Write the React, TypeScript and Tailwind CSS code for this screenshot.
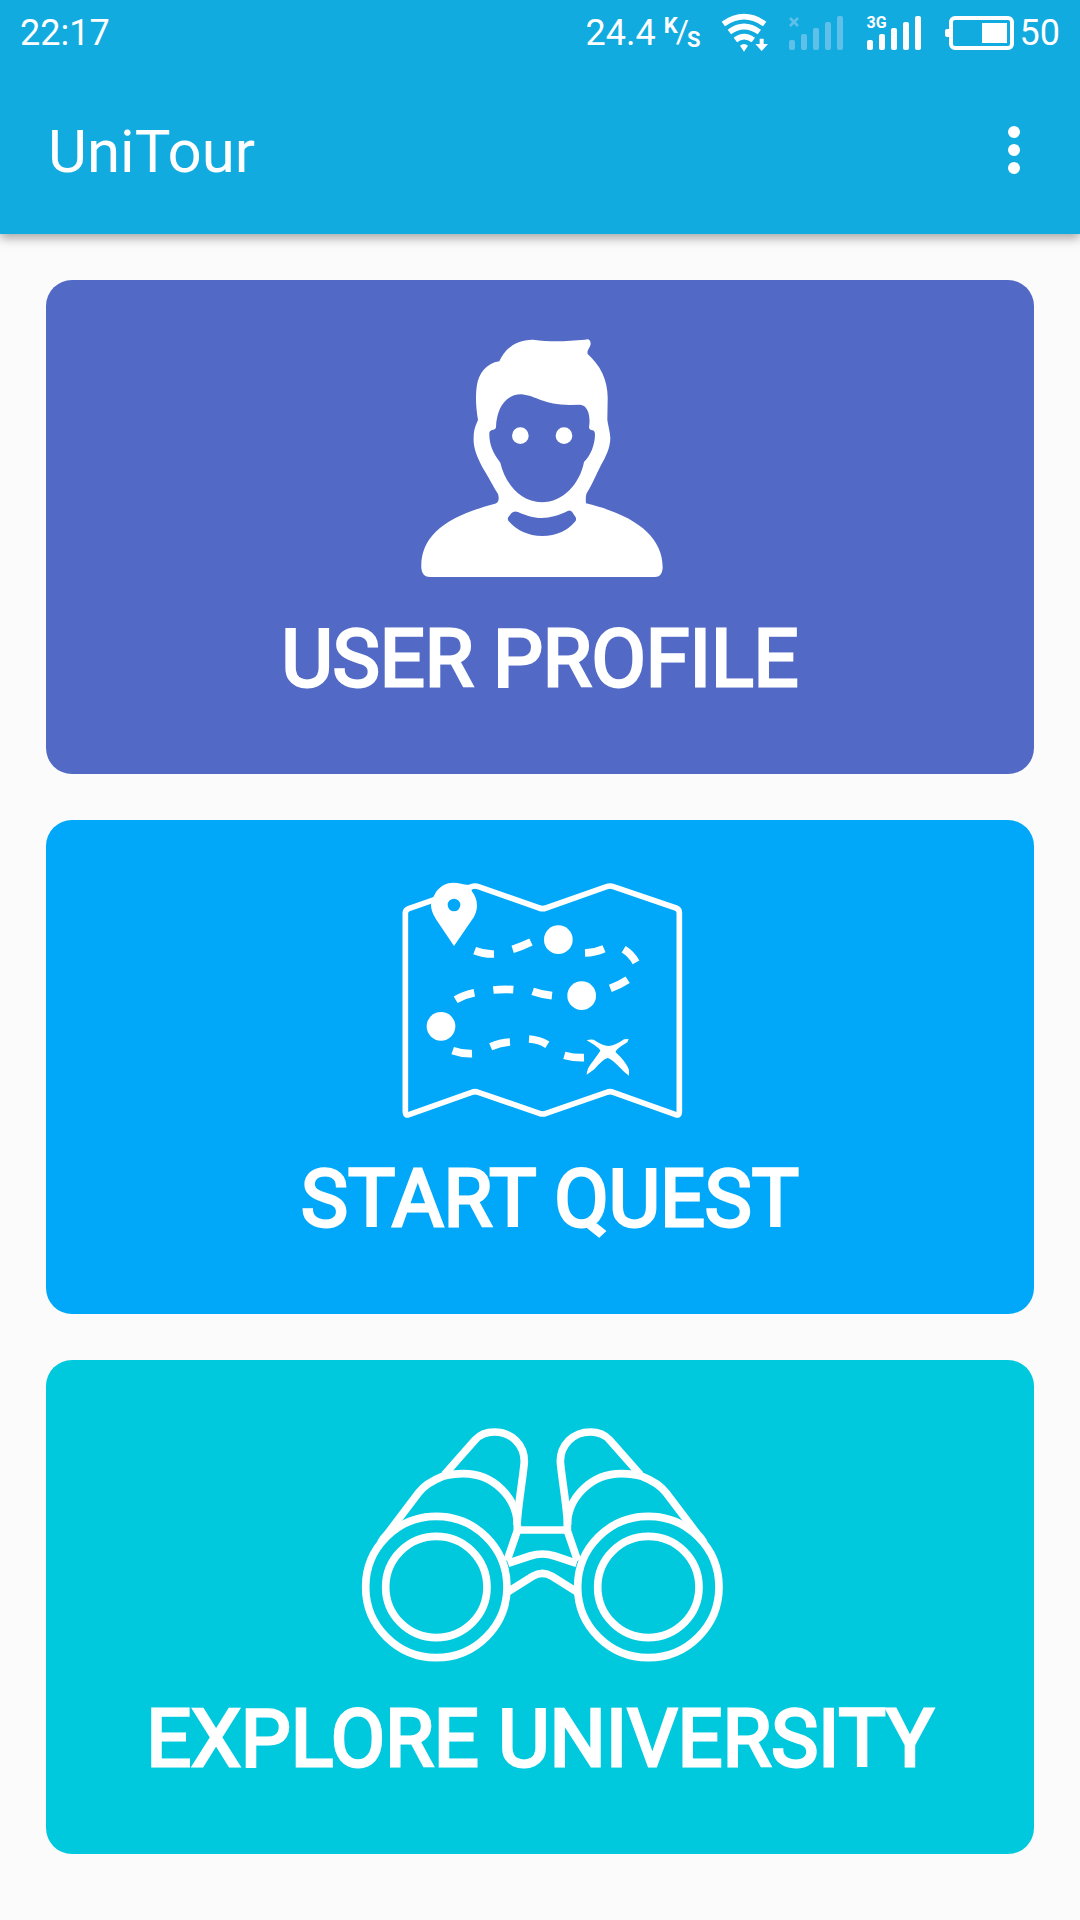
import React from "react";

function WifiIcon() {
  return (
    <svg viewBox="480 40 144 120" className="h-10 w-12" fill="none" stroke="white" strokeWidth="17" aria-label="Wi-Fi">
      <path d="M487 73 Q549 29 611 73" />
      <path d="M505 97 Q549 64 595 97" />
      <path d="M523 121 Q549 101 577 121" />
      <path d="M537 138 Q549 128 561 138 L549 156 Z" fill="white" stroke="none" />
      <path d="M596 117 H608 V133 H621 L602 154 L583 133 H596 Z" fill="white" stroke="none" />
    </svg>
  );
}

function SignalIcon({ children }: { children?: React.ReactNode }) {
  return (
    <div className="relative">
      <svg viewBox="0 0 54 34" className="h-[34px] w-[54px]" fill="currentColor" aria-hidden="true">
        <rect x="0" y="24" width="6" height="10" rx="2" />
        <rect x="12" y="18" width="6" height="16" rx="2" />
        <rect x="24" y="12" width="6" height="22" rx="2" />
        <rect x="36" y="6" width="6" height="28" rx="2" />
        <rect x="48" y="0" width="6" height="34" rx="2" />
      </svg>
      <div className="absolute -top-px left-0">{children}</div>
    </div>
  );
}

function BatteryIcon() {
  return (
    <svg viewBox="0 0 69 34" className="h-[34px] w-[69px]" aria-label="Battery">
      <rect x="0" y="13" width="6" height="8" rx="2" fill="white" />
      <rect x="6" y="2" width="61" height="30" rx="4" fill="none" stroke="white" strokeWidth="4" />
      <rect x="37" y="7" width="25" height="20" fill="white" />
    </svg>
  );
}

function UserIcon() {
  return (
    <svg viewBox="-180 30 1200 780" className="h-[260px] w-[400px] max-w-full" fill="white" aria-hidden="true">
      <path
        fillRule="evenodd"
        d="M90 771 Q66 771 64 745 C60 650 135 590 285 551 Q301 545 294 522 C272 485 262 465 248 443 C228 405 219 380 221 350 C222 325 228 315 234 300 C228 265 226 230 230 200 C236 160 258 130 298 124 C315 85 350 58 400 59 C450 66 500 64 555 59 Q572 54 572 72 C570 85 560 90 563 102 C600 135 625 180 623 240 L622 300 C625 320 630 335 631 355 C630 385 618 410 602 437 C588 465 578 490 560 520 Q556 530 558 550 C705 585 790 650 788 745 Q786 771 765 771 Z
        M288 322 C290 260 320 222 365 223 C410 228 430 255 510 255 L540 254 C562 255 573 285 567 322 Q568 331 578 331 Q585 333 585 345 C584 375 573 405 552 426 C540 490 490 547 425 547 C360 545 315 490 301 428 C280 400 267 375 268 338 Q270 330 280 329 Q287 329 288 322 Z
        M325 602 Q321 596 327 589 L334 580 Q342 571 354 576 C375 586 400 594 425 594 C450 594 480 585 503 573 Q512 569 517 577 L527 592 Q530 598 526 604 Q490 648 427 648 Q362 646 325 602 Z"
      />
      <circle cx="361" cy="347" r="25" />
      <circle cx="492" cy="347" r="25" />
    </svg>
  );
}

function MapIcon() {
  return (
    <svg viewBox="-150 0 1200 780" className="h-[260px] w-[400px] max-w-full" fill="none" stroke="white" aria-hidden="true">
      <path
        strokeWidth="17"
        strokeLinejoin="round"
        d="M46 130 Q46 120 56 116 L245 50 Q255 46 265 50 L448 114 Q458 118 468 114 L650 50 Q660 46 670 50 L858 114 Q868 118 868 128 V726 Q868 738 857 734 L670 667 Q660 663 650 667 L468 730 Q458 734 448 730 L265 667 Q255 663 245 667 L57 734 Q46 738 46 726 Z"
      />
      <path
        fill="white"
        stroke="none"
        fillRule="evenodd"
        d="M192 228 L141 152 C128 133 123 118 123 103 C125 92 130 80 138 66 C152 47 170 38 190 38 C208 38 220 44 232 44 L245 47 V63 C255 76 261 90 261 107 C261 122 255 138 243 154 Z M211 105 a19 19 0 1 0 -38 0 a19 19 0 1 0 38 0 Z"
      />
      <g fill="white" stroke="none">
        <circle cx="505" cy="209" r="43" />
        <circle cx="575" cy="377" r="43" />
        <circle cx="153" cy="469" r="43" />
        <path d="M590 511 Q600 507 611 509 Q636 526 655 528 Q676 527 702 508 L716 507 L712 517 Q676 538 677 547 Q708 575 717 600 V617 Q700 605 695 598 Q662 564 653 564 Q640 566 613 598 L590 614 Q591 597 602 583 Q625 551 631 542 Q628 533 590 511 Z" />
      </g>
      <g strokeWidth="23">
        <path d="M254 242 Q282 253 312 252" />
        <path d="M368 238 Q396 229 423 216" />
        <path d="M585 249 Q614 248 642 236" />
        <path d="M701 238 Q724 252 738 277" />
        <path d="M661 355 Q690 344 713 329" />
        <path d="M197 389 Q222 374 253 368" />
        <path d="M310 360 Q340 357 370 359" />
        <path d="M428 364 Q457 374 486 377" />
        <path d="M188 542 Q216 552 246 551" />
        <path d="M302 530 Q330 518 360 516" />
        <path d="M417 507 Q448 509 472 524" />
        <path d="M523 556 Q552 564 582 563" />
      </g>
    </svg>
  );
}

function Barrel() {
  return (
    <>
      <circle cx="259" cy="531" r="212" />
      <circle cx="259" cy="531" r="152" />
      <path d="M283 194 L375 90 C390 73 410 66 433 66 C485 66 523 105 523 155 C519 205 505 275 501 345" />
      <path d="M92 398 Q100 384 112 372 L206 248 C222 227 245 212 278 199 C298 193 318 191 340 191 C430 191 501 262 502 345 V362 L471 452" />
    </>
  );
}

function BinocularsIcon() {
  return (
    <svg viewBox="-30 0 1200 780" className="h-[260px] w-[400px] max-w-full" fill="none" stroke="white" strokeWidth="23" strokeLinejoin="round" aria-hidden="true">
      <Barrel />
      <g transform="translate(1154 0) scale(-1 1)">
        <Barrel />
      </g>
      <path d="M502 360 H652" />
      <path d="M474 460 L540 438 Q577 426 614 438 L680 460" />
      <path d="M474 545 L548 499 Q577 481 606 499 L680 545" />
    </svg>
  );
}

function MenuCard({ label, color, labelClass = "", children }: { label: string; color: string; labelClass?: string; children: React.ReactNode }) {
  return (
    <button type="button" className={`flex w-full cursor-pointer flex-col items-center rounded-[26px] pt-[50px] pb-[75px] ${color}`}>
      {children}
      <span className={`mt-[29px] text-[79px] leading-[80px] [-webkit-text-stroke:3px_white] [stroke-linejoin:round] ${labelClass}`}>{label}</span>
    </button>
  );
}

export default function App() {
  return (
    <div className="min-h-screen bg-[#fbfbfb] font-[Roboto,sans-serif] text-white">
      <header className="bg-[#12abdf] shadow-[0_4px_10px_rgba(0,0,0,0.35)]">
        <div className="flex h-[66px] items-center justify-between px-5 text-4xl">
          <time>22:17</time>
          <div className="flex items-center">
            <span>24.4</span>
            <span className="ml-2 flex h-9 text-[22px] leading-none font-bold">
              <span>K</span>
              <span className="-mx-0.5 text-[32px] font-normal">/</span>
              <span className="self-end">S</span>
            </span>
            <span className="ml-5 flex"><WifiIcon /></span>
            <span className="ml-5 flex text-[#5fc0ea]">
              <SignalIcon>
                <svg viewBox="0 0 10 10" className="mt-0.5 size-2.5" stroke="currentColor" strokeWidth="2.5" aria-hidden="true">
                  <path d="M1 1 L9 9 M9 1 L1 9" />
                </svg>
              </SignalIcon>
            </span>
            <span className="ml-6 flex">
              <SignalIcon>
                <span className="block text-base leading-none font-bold">3G</span>
              </SignalIcon>
            </span>
            <span className="ml-6 flex"><BatteryIcon /></span>
            <span className="ml-1.5">50</span>
          </div>
        </div>
        <div className="flex h-[168px] items-center justify-between pr-10 pl-12">
          <h1 className="pt-1 text-[60px] leading-none">UniTour</h1>
          <button type="button" aria-label="More options" className="flex cursor-pointer flex-col gap-1.5 px-5 py-4">
            <span className="size-3 rounded-full bg-white" />
            <span className="size-3 rounded-full bg-white" />
            <span className="size-3 rounded-full bg-white" />
          </button>
        </div>
      </header>
      <main className="flex flex-col gap-[46px] px-[46px] pt-[46px] pb-16">
        <MenuCard label="USER PROFILE" color="bg-[#526ac6]">
          <UserIcon />
        </MenuCard>
        <MenuCard label="START QUEST" color="bg-[#01a8f9]" labelClass="pl-5">
          <MapIcon />
        </MenuCard>
        <MenuCard label="EXPLORE UNIVERSITY" color="bg-[#00c9de]">
          <BinocularsIcon />
        </MenuCard>
      </main>
    </div>
  );
}
